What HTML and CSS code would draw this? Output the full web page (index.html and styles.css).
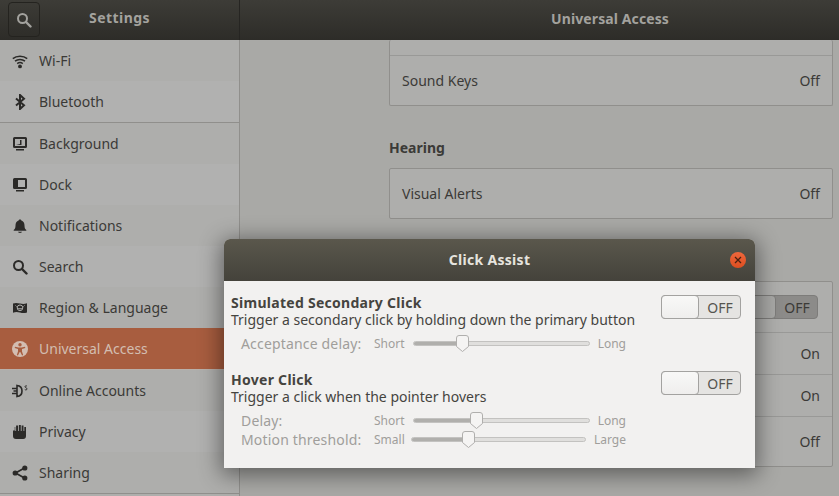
FILE: index.html
```html
<!DOCTYPE html>
<html lang="en">
<head>
    <meta charset="UTF-8">
    <title>Settings - Universal Access</title>
    <link rel="stylesheet" href="styles.css">
</head>
<body>

    <!-- Header -->
    <div class="headerbar">
        <div class="header-left">
            <div class="search-btn">
                <svg class="icon" viewBox="0 0 16 16"><circle cx="6.500" cy="6.500" r="4.500" fill="none" stroke="currentColor" stroke-width="2"/><path d="M10 10l4.500 4.500" stroke="currentColor" stroke-width="2.400" stroke-linecap="round"/></svg>
            </div>
            <div class="header-title">Settings</div>
        </div>
        <div class="header-title header-main">Universal Access</div>
    </div>

    <div class="layout">
        <!-- Sidebar -->
        <div class="sidebar">
            <a class="nav-row">
                <svg class="icon" viewBox="0 0 16 16"><g fill="none" stroke="currentColor" stroke-width="1.500"><path d="M.8 5.600C4.600 2.300 11.400 2.300 15.200 5.600"/><path d="M3 8.200c2.800-2.300 7.200-2.300 10 0"/><path d="M5.200 10.600c1.600-1.200 4-1.200 5.600 0"/></g><circle cx="8" cy="13.400" r="1.900" fill="currentColor"/></svg>
                <span>Wi-Fi</span>
            </a>
            <a class="nav-row alt">
                <svg class="icon" viewBox="0 0 16 16"><path d="M4 4.600l8 6.600L8 15V1l4 3.800-8 6.600" fill="none" stroke="currentColor" stroke-width="2"/></svg>
                <span>Bluetooth</span>
            </a>
            <div class="nav-sep"></div>
            <a class="nav-row">
                <svg class="icon" viewBox="0 0 16 16"><path fill-rule="evenodd" fill="currentColor" d="M2.500 1h11A1.500 1.500 0 0 1 15 2.500v8a1.500 1.500 0 0 1-1.500 1.500h-11A1.500 1.500 0 0 1 1 10.500v-8A1.500 1.500 0 0 1 2.500 1zM3 3v7h10V3z"/><path fill="currentColor" d="M4 9l4-1V4h1.500v5zM4 13h8v1.500H4z"/></svg>
                <span>Background</span>
            </a>
            <a class="nav-row alt">
                <svg class="icon" viewBox="0 0 16 16"><path fill-rule="evenodd" fill="currentColor" d="M2.500 1h11A1.500 1.500 0 0 1 15 2.500v8a1.500 1.500 0 0 1-1.500 1.500h-11A1.500 1.500 0 0 1 1 10.500v-8A1.500 1.500 0 0 1 2.500 1zM6 3v7h7V3z"/><path fill="currentColor" d="M4 13h8v1.500H4z"/></svg>
                <span>Dock</span>
            </a>
            <a class="nav-row">
                <svg class="icon" viewBox="0 0 16 16"><path fill="currentColor" d="M8 1.500c.8 0 1.300.5 1.400 1.100C11.400 3.200 12.500 5 12.500 7.500c0 2.500.7 3.800 1.800 4.500v.8H1.700V12c1.100-.7 1.800-2 1.800-4.500 0-2.500 1.100-4.300 3.100-4.900.1-.6.600-1.100 1.400-1.100zM6 13.800h4c0 .7-.9 1.200-2 1.200s-2-.5-2-1.200z"/></svg>
                <span>Notifications</span>
            </a>
            <a class="nav-row alt">
                <svg class="icon" viewBox="0 0 16 16"><circle cx="6.500" cy="6.500" r="4.500" fill="none" stroke="currentColor" stroke-width="2"/><path d="M10 10l4.500 4.500" stroke="currentColor" stroke-width="2.400" stroke-linecap="round"/></svg>
                <span>Search</span>
            </a>
            <a class="nav-row">
                <svg class="icon" viewBox="0 0 16 16"><path fill="currentColor" d="M1 3.500c2.500-1 4.500-.6 7 0s4.500.6 7-.2v9.200c-2.500.8-4.500.8-7 .1s-4.500-.8-7 .1z"/><g fill="none" stroke="#aeaeac" stroke-width="1"><circle cx="8" cy="7.800" r="2.800"/><path d="M5.300 7.800c1.500 1.400 3.900 1.400 5.400 0M3.500 5.500l1 1M12.500 5.500l-1 1"/></g></svg>
                <span>Region &amp; Language</span>
            </a>
            <a class="nav-row selected">
                <svg class="icon" viewBox="0 0 16 16"><circle cx="8" cy="8" r="8" fill="currentColor"/><g fill="#a85d3f"><circle cx="8" cy="3.800" r="1.700"/><path d="M3 5.800l3.500.8h3l3.500-.8.300 1.100-3.300 1v2.500l1.200 3.700-1.100.4L8.300 11h-.6l-1.800 3.500-1.100-.4 1.200-3.700V7.900l-3.300-1z"/></g></svg>
                <span>Universal Access</span>
            </a>
            <div class="nav-sep nav-sep-light"></div>
            <a class="nav-row">
                <svg class="icon" viewBox="0 0 16 16"><g fill="none" stroke="currentColor"><path stroke-width="1.600" d="M5 2.500c3 .3 5 2.600 5 5.500s-2 5.200-5 5.500z"/><path stroke-width="1.500" d="M0 5.500h5M0 10.500h5M1.500 8H5"/></g><path fill="none" stroke="currentColor" stroke-width="1" d="M15 3.200c-.6-.6-2-.5-2 .5s2 1 2 2.200-1.500 1.200-2.200.6"/></svg>
                <span>Online Accounts</span>
            </a>
            <a class="nav-row alt">
                <svg class="icon" viewBox="0 0 16 16"><path fill="currentColor" d="M1 6.500h1.700V3h.6v4h.8V1.500h2v5.500h.8V1h1.900v6h.8V1.500h1.900V7h.8V3h1.700v9c0 1.800-1 3-2.800 3H4c-2 0-3-1.200-3-3z"/></svg>
                <span>Privacy</span>
            </a>
            <a class="nav-row">
                <svg class="icon" viewBox="0 0 16 16"><path d="M12.500 3L3.500 8l9 5" fill="none" stroke="currentColor" stroke-width="1.700"/><circle cx="12.800" cy="3" r="2.600" fill="currentColor"/><circle cx="3.200" cy="8" r="2.600" fill="currentColor"/><circle cx="12.800" cy="13" r="2.600" fill="currentColor"/></svg>
                <span>Sharing</span>
            </a>
            <div class="nav-sep"></div>
        </div>

        <!-- Main Content -->
        <div class="main">
            <div class="panel panel-cut">
                <div class="panel-row panel-row-cut"></div>
                <div class="panel-row"><span>Sound Keys</span><span>Off</span></div>
            </div>

            <h2 class="section-title">Hearing</h2>
            <div class="panel">
                <div class="panel-row"><span>Visual Alerts</span><span>Off</span></div>
            </div>

            <!-- heading and row names of this panel are covered by the dialog -->
            <div class="section-title"></div>
            <div class="panel">
                <div class="panel-row panel-row-tall">
                    <div class="switch switch-dim"><div class="switch-thumb"></div><span class="switch-label">OFF</span></div>
                </div>
                <div class="panel-row"><span>On</span></div>
                <div class="panel-row"><span>On</span></div>
                <div class="panel-row panel-row-last"><span>Off</span></div>
            </div>
        </div>
    </div>

    <!-- Click Assist dialog -->
    <div class="dialog">
        <div class="dialog-title">
            <span>Click Assist</span>
            <div class="close-btn">
                <svg viewBox="0 0 8 8"><path d="M1 1l6 6M7 1L1 7" stroke="#4a2010" stroke-width="1.300"/></svg>
            </div>
        </div>
        <div class="dialog-body">
            <div class="option option-first">
                <div class="option-text">
                    <h3>Simulated Secondary Click</h3>
                    <p>Trigger a secondary click by holding down the primary button</p>
                </div>
                <div class="switch"><div class="switch-thumb"></div><span class="switch-label">OFF</span></div>
            </div>
            <div class="slider-row slider-row-first">
                <label>Acceptance delay:</label>
                <span class="scale-label">Short</span>
                <div class="track">
                    <div class="track-fill" style="width: 27.700%"></div>
                    <div class="thumb" style="left: 27.700%"><svg viewBox="0 0 13 17"><path d="M.5 3A2.500 2.500 0 0 1 3 .5h7A2.500 2.500 0 0 1 12.500 3v8.500l-6 5-6-5z" fill="#f5f4f3" stroke="#b0afad"/></svg></div>
                </div>
                <span class="scale-label">Long</span>
            </div>

            <div class="option option-second">
                <div class="option-text">
                    <h3>Hover Click</h3>
                    <p>Trigger a click when the pointer hovers</p>
                </div>
                <div class="switch"><div class="switch-thumb"></div><span class="switch-label">OFF</span></div>
            </div>
            <div class="slider-row slider-row-delay">
                <label>Delay:</label>
                <span class="scale-label">Short</span>
                <div class="track">
                    <div class="track-fill" style="width: 35.600%"></div>
                    <div class="thumb" style="left: 35.600%"><svg viewBox="0 0 13 17"><path d="M.5 3A2.500 2.500 0 0 1 3 .5h7A2.500 2.500 0 0 1 12.500 3v8.500l-6 5-6-5z" fill="#f5f4f3" stroke="#b0afad"/></svg></div>
                </div>
                <span class="scale-label">Long</span>
            </div>
            <div class="slider-row slider-row-motion">
                <label>Motion threshold:</label>
                <span class="scale-label">Small</span>
                <div class="track">
                    <div class="track-fill" style="width: 32.600%"></div>
                    <div class="thumb" style="left: 32.600%"><svg viewBox="0 0 13 17"><path d="M.5 3A2.500 2.500 0 0 1 3 .5h7A2.500 2.500 0 0 1 12.500 3v8.500l-6 5-6-5z" fill="#f5f4f3" stroke="#b0afad"/></svg></div>
                </div>
                <span class="scale-label">Large</span>
            </div>
        </div>
    </div>

</body>
</html>
```

FILE: styles.css
```css
:root {
    --text: #3b3a37;
    --dim-text: #a09e9b;
    --border: #908f8c;
    --window-bg: #a9a9a6;
    --row-bg: #aeaeac;
    --row-alt: #b1b1b0;
    --dialog-bg: #f2f1f0;
}

* {
    margin: 0;
    padding: 0;
    box-sizing: border-box;
}

html, body {
    height: 100%;
    overflow: hidden;
}

body {
    font-family: "Noto Sans", sans-serif;
    font-size: 14px;
    color: var(--text);
    background: var(--window-bg);
    display: flex;
    flex-direction: column;
}

.icon {
    width: 16px;
    height: 16px;
    flex: none;
}

/* Header */
.headerbar {
    height: 40px;
    flex: none;
    display: flex;
    background: linear-gradient(#3d3c37, #2d2c28);
    color: #a3a29e;
}

.header-left {
    width: 240px;
    display: flex;
    align-items: center;
    padding: 0 0 5px 8px;
    border-right: 1px solid #262522;
}

.search-btn {
    width: 32px;
    height: 35px;
    display: flex;
    align-items: center;
    justify-content: center;
    border: 1px solid #24231f;
    border-radius: 4px;
    margin-top: 4px;
}

.header-title {
    font-weight: 700;
    font-size: 14px;
    letter-spacing: 0.45px;
    text-align: center;
    flex: 1;
    padding-right: 40px;
}

.header-main {
    align-self: center;
    letter-spacing: 0.1px;
    padding: 0 0 4px 141px;
}

/* Sidebar */
.layout {
    flex: 1;
    display: flex;
    min-height: 0;
}

.sidebar {
    width: 240px;
    flex: none;
    background: var(--row-bg);
    border-right: 1px solid var(--border);
}

.nav-row {
    height: 41px;
    display: flex;
    align-items: center;
    gap: 11px;
    padding-left: 12px;
    background: var(--row-bg);
    color: var(--text);
}

.nav-row .icon {
    color: #2b2a28;
}

.nav-row.alt {
    background: var(--row-alt);
}

.nav-row.selected {
    background: #a85d3f;
    color: #d3bdb1;
}

.nav-row.selected .icon {
    color: #d3bdb1;
}

.nav-sep {
    height: 1px;
    background: var(--border);
}

.nav-sep-light {
    background: #b9b0aa;
}

/* Main */
.main {
    flex: 1;
    padding: 0 6px 0 149px;
    min-width: 0;
}

.panel {
    background: var(--row-bg);
    border: 1px solid var(--border);
    border-radius: 2px;
}

.panel-cut {
    border-top: 0;
}

.panel-row {
    height: 42px;
    display: flex;
    align-items: center;
    justify-content: space-between;
    padding: 0 12px;
    border-top: 1px solid #999997;
}

.panel-row > :last-child {
    margin-left: auto;
}

.panel-row:first-child {
    border-top: 0;
}

.panel .panel-row-cut {
    height: 15px;
}

.panel-cut .panel-row + .panel-row {
    height: 50px;
}

.panel-row-tall {
    height: 50px;
}

.panel-row-last {
    height: 50px;
}

.panel:not(.panel-cut) .panel-row:only-child {
    height: 49px;
}

.section-title {
    font-size: 14px;
    font-weight: 700;
    height: 20px;
    line-height: 20px;
    margin: 32px 0 10px;
}

/* Switch */
.switch {
    width: 80px;
    height: 24px;
    flex: none;
    display: flex;
    align-items: center;
    background: #e5e4e2;
    border: 1px solid #a3a2a0;
    border-radius: 4px;
}

.switch-thumb {
    width: 38px;
    height: 24px;
    margin: -1px 0 -1px -1px;
    background: linear-gradient(#f8f8f7, #efeeed);
    border: 1px solid #a3a2a0;
    border-radius: 4px;
}

.switch-label {
    flex: 1;
    text-align: center;
    font-size: 14px;
    color: #55544f;
    padding-left: 1px;
}

.switch-dim {
    background: #8c8b89;
    border-color: #7d7c7a;
    margin-right: -2px;
    transform: translateX(-4px);
}

.switch-dim .switch-thumb {
    background: #a8a8a6;
    border-color: #7d7c7a;
}

.switch-dim .switch-label {
    color: #3b3a37;
}

/* Dialog */
.dialog {
    position: absolute;
    left: 224px;
    top: 239px;
    width: 531px;
    height: 229px;
    background: var(--dialog-bg);
    border-radius: 6px 6px 0 0;
    box-shadow: 0 4px 22px 3px rgba(0, 0, 0, 0.45);
}

.dialog-title {
    position: relative;
    height: 42px;
    display: flex;
    align-items: center;
    justify-content: center;
    padding-bottom: 2px;
    background: linear-gradient(#5a574c, #44423b);
    border-radius: 6px 6px 0 0;
    color: #e6e4df;
    font-weight: 700;
    letter-spacing: 0.3px;
}

.close-btn {
    position: absolute;
    right: 9px;
    top: 13px;
    width: 16px;
    height: 16px;
    border-radius: 50%;
    background: linear-gradient(#f0673c, #dc4e20);
    display: flex;
    align-items: center;
    justify-content: center;
}

.close-btn svg {
    width: 8px;
    height: 8px;
}

.dialog-body {
    padding: 13px 14px 0 7px;
    color: #45443f;
}

.option {
    display: flex;
    justify-content: space-between;
    height: 34px;
}

.option-first .switch {
    margin-top: 1px;
}

.option-second {
    margin-top: 18px;
}

.option-text h3 {
    font-size: 14px;
    font-weight: 700;
    line-height: 17px;
    letter-spacing: 0.28px;
}

.option-text p {
    font-size: 14px;
    line-height: 17px;
}

.slider-row {
    display: flex;
    align-items: center;
    height: 19px;
    width: 385px;
    margin-left: 10px;
    color: var(--dim-text);
}

.slider-row-first {
    margin-top: 6px;
}

.slider-row-delay {
    margin-top: 6px;
}

.slider-row label {
    width: 133px;
    flex: none;
    letter-spacing: 0.17px;
}

.scale-label {
    font-size: 12px;
}

.track {
    position: relative;
    flex: 1;
    height: 5px;
    margin: 0 8px;
    background: #e0dfdd;
    border: 1px solid #c3c2c0;
    border-radius: 3px;
}

.slider-row-motion .track {
    margin-left: 6px;
}

.track-fill {
    height: 100%;
    background: #b0afac;
    border-radius: 3px 0 0 3px;
}

.thumb {
    position: absolute;
    top: -7px;
    width: 13px;
    height: 17px;
    margin-left: -6px;
}

.thumb svg {
    display: block;
    width: 13px;
    height: 17px;
}
```
